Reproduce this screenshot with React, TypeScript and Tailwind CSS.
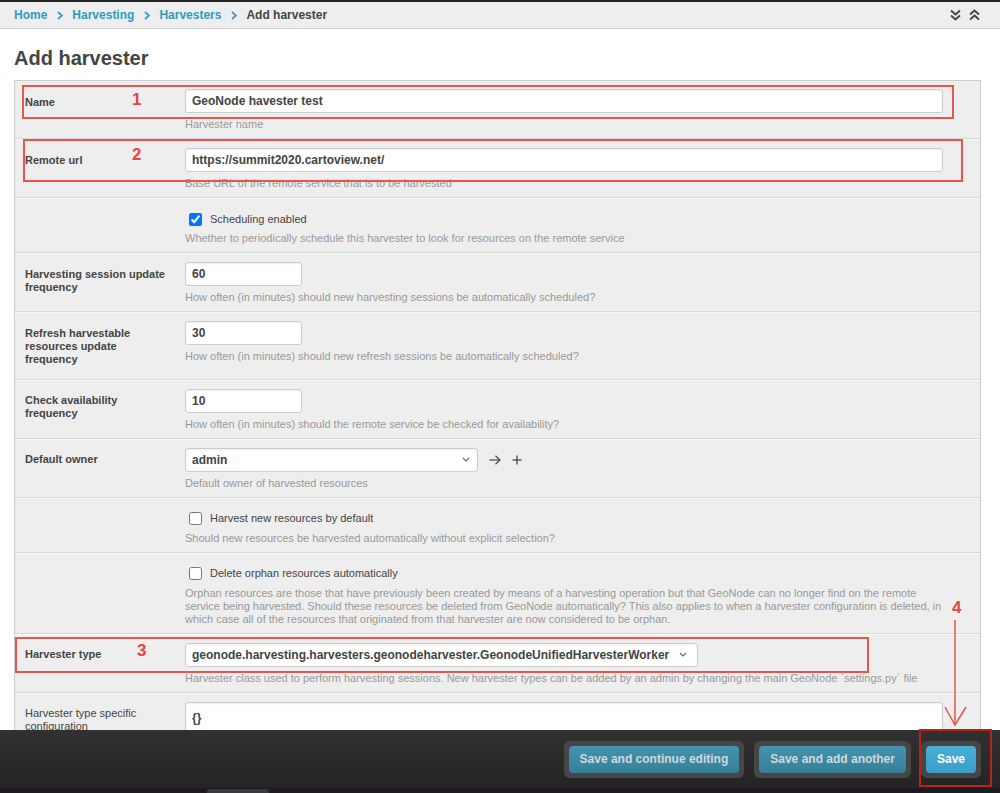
import React from "react";

const Chev = () => (
  <svg width="6" height="9" viewBox="0 0 6 9" className="ml-[10px] mr-[9px] shrink-0">
    <polyline points="1,1 5,4.5 1,8" fill="none" stroke="#3a9ec4" strokeWidth="1.8" />
  </svg>
);

const Row = ({
  label,
  children,
  first,
  normal,
}: {
  label?: React.ReactNode;
  children: React.ReactNode;
  first?: boolean;
  normal?: boolean;
}) => (
  <div
    className={
      first
        ? "flex"
        : "flex border-t border-[#d9d9d9] shadow-[inset_0_1px_0_#f8f8f8]"
    }
  >
    <div
      className={`w-[170px] shrink-0 pl-[10px] pr-[18px] pt-[14.5px] pb-[13px] text-[11px] leading-[13px] text-[#444] ${
        normal ? "font-normal" : "font-bold"
      }`}
    >
      {label}
    </div>
    <div className="flex-1 min-w-0 pr-[37px]">{children}</div>
  </div>
);

const Help = ({ children, mt = "mt-[5px]" }: { children: React.ReactNode; mt?: string }) => (
  <p className={`${mt} text-[11px] leading-[13px] text-[#999]`}>{children}</p>
);

const inputCls =
  "block h-[24px] bg-white border border-[#ccc] rounded-[3px] px-[6px] text-[12px] font-bold text-[#444] shadow-[inset_0_1px_2px_rgba(0,0,0,0.07)] outline-none";

const SelChevron = () => (
  <svg width="8" height="5" viewBox="0 0 8 5" className="block shrink-0">
    <polyline points="1,1 4,4 7,1" fill="none" stroke="#666" strokeWidth="1.1" />
  </svg>
);

const FieldCol = ({ children }: { children: React.ReactNode }) => (
  <div className="pt-[9px] pb-[7px]">{children}</div>
);

const CheckCol = ({
  checked,
  text,
  children,
}: {
  checked?: boolean;
  text: string;
  children: React.ReactNode;
}) => (
  <div className="pt-[10px] pb-[7px]">
    <div className="h-[22px] flex items-center">
      <input
        type="checkbox"
        defaultChecked={checked}
        className="block m-0 ml-[4px] w-[13px] h-[13px]"
      />
      <span className="ml-[8px] text-[11px] text-[#444]">{text}</span>
    </div>
    <Help mt="mt-[2px]">{children}</Help>
  </div>
);

const Btn = ({ children, primary }: { children: React.ReactNode; primary?: boolean }) => (
  <div className="p-[5px] bg-[#464646] rounded-[6px]">
    <div
      className={
        primary
          ? "h-[27px] px-[11px] rounded-[4px] flex items-center text-[12px] font-bold text-white bg-gradient-to-b from-[#47aed6] to-[#3a9ec8]"
          : "h-[27px] px-[11px] rounded-[4px] flex items-center text-[12px] font-bold text-[#cfd8db] bg-gradient-to-b from-[#4593ae] to-[#367f99]"
      }
    >
      {children}
    </div>
  </div>
);

export default function App() {
  return (
    <div className="relative w-[1000px] h-[793px] flex flex-col overflow-hidden bg-white font-['Liberation_Sans',Arial,sans-serif]">
      <div className="h-[2px] shrink-0 bg-[#222]" />
      <div className="h-[27px] shrink-0 bg-[#eee] border-b border-[#ccc] flex items-center pl-[14px] pr-[20px] text-[12px] font-bold">
        <span className="text-[#309bbf]">Home</span>
        <Chev />
        <span className="text-[#309bbf]">Harvesting</span>
        <Chev />
        <span className="text-[#309bbf]">Harvesters</span>
        <Chev />
        <span className="text-[#444]">Add harvester</span>
        <div className="ml-auto flex items-center gap-[8px]">
          <svg width="11" height="12" viewBox="0 0 11 12">
            <polyline points="1,1.5 5.5,5.5 10,1.5" fill="none" stroke="#444" strokeWidth="1.8" />
            <polyline points="1,6.5 5.5,10.5 10,6.5" fill="none" stroke="#444" strokeWidth="1.8" />
          </svg>
          <svg width="11" height="12" viewBox="0 0 11 12">
            <polyline points="1,5.5 5.5,1.5 10,5.5" fill="none" stroke="#444" strokeWidth="1.8" />
            <polyline points="1,10.5 5.5,6.5 10,10.5" fill="none" stroke="#444" strokeWidth="1.8" />
          </svg>
        </div>
      </div>

      <div className="flex-1 min-h-0 overflow-hidden">
        <h1 className="mt-[17px] mb-[10px] ml-[14px] text-[20px] leading-[24px] font-bold text-[#444]">
          Add harvester
        </h1>
        <div className="ml-[14px] mr-[19px] border border-[#ccc] bg-[#eee]">
          <Row first label="Name">
            <div className="pt-[8px] pb-[7px]">
              <input className={`${inputCls} w-full`} defaultValue="GeoNode havester test" />
              <Help>Harvester name</Help>
            </div>
          </Row>
          <Row label="Remote url">
            <FieldCol>
              <input className={`${inputCls} w-full`} defaultValue="https://summit2020.cartoview.net/" />
              <Help>Base URL of the remote service that is to be harvested</Help>
            </FieldCol>
          </Row>
          <Row>
            <CheckCol checked text="Scheduling enabled">
              Whether to periodically schedule this harvester to look for resources on the remote service
            </CheckCol>
          </Row>
          <Row label="Harvesting session update frequency">
            <FieldCol>
              <input className={`${inputCls} w-[117px]`} defaultValue="60" />
              <Help>How often (in minutes) should new harvesting sessions be automatically scheduled?</Help>
            </FieldCol>
          </Row>
          <Row label="Refresh harvestable resources update frequency">
            <FieldCol>
              <input className={`${inputCls} w-[117px]`} defaultValue="30" />
              <Help>How often (in minutes) should new refresh sessions be automatically scheduled?</Help>
            </FieldCol>
          </Row>
          <Row label="Check availability frequency">
            <FieldCol>
              <input className={`${inputCls} w-[117px]`} defaultValue="10" />
              <Help>How often (in minutes) should the remote service be checked for availability?</Help>
            </FieldCol>
          </Row>
          <Row label="Default owner">
            <FieldCol>
              <div className="flex items-center">
                <div className={`${inputCls} w-[293px] flex items-center justify-between pr-[7px]`}>
                  <span>admin</span>
                  <SelChevron />
                </div>
                <svg width="12" height="10" viewBox="0 0 12 10" className="ml-[11px]">
                  <line x1="0.5" y1="5" x2="11" y2="5" stroke="#444" strokeWidth="1.2" />
                  <polyline points="6.5,0.8 11,5 6.5,9.2" fill="none" stroke="#444" strokeWidth="1.2" />
                </svg>
                <svg width="10" height="10" viewBox="0 0 10 10" className="ml-[11px]">
                  <line x1="5" y1="0.5" x2="5" y2="9.5" stroke="#444" strokeWidth="1.3" />
                  <line x1="0.5" y1="5" x2="9.5" y2="5" stroke="#444" strokeWidth="1.3" />
                </svg>
              </div>
              <Help>Default owner of harvested resources</Help>
            </FieldCol>
          </Row>
          <Row>
            <CheckCol text="Harvest new resources by default">
              Should new resources be harvested automatically without explicit selection?
            </CheckCol>
          </Row>
          <Row>
            <CheckCol text="Delete orphan resources automatically">
              Orphan resources are those that have previously been created by means of a harvesting
              operation but that GeoNode can no longer find on the remote service being harvested.
              Should these resources be deleted from GeoNode automatically? This also applies to when a
              harvester configuration is deleted, in which case all of the resources that originated
              from that harvester are now considered to be orphan.
            </CheckCol>
          </Row>
          <Row label="Harvester type">
            <FieldCol>
              <div className="flex">
                <div className={`${inputCls} flex items-center pr-[10px]`}>
                  <span>geonode.harvesting.harvesters.geonodeharvester.GeonodeUnifiedHarvesterWorker</span>
                  <span className="ml-[10px] flex">
                    <SelChevron />
                  </span>
                </div>
              </div>
              <Help>
                Harvester class used to perform harvesting sessions. New harvester types can be added by
                an admin by changing the main GeoNode `settings.py` file
              </Help>
            </FieldCol>
          </Row>
          <Row normal label="Harvester type specific configuration">
            <FieldCol>
              <div className="h-[100px] w-full bg-white border border-[#ccc] rounded-[3px] px-[6px] pt-[6px] text-[12px] font-bold text-[#444] shadow-[inset_0_1px_2px_rgba(0,0,0,0.07)]">
                {"{}"}
              </div>
            </FieldCol>
          </Row>
        </div>
      </div>

      <div className="h-[58px] shrink-0 bg-gradient-to-b from-[#313131] to-[#242424] flex items-center justify-end pr-[19px] gap-[10px]">
        <Btn>Save and continue editing</Btn>
        <Btn>Save and add another</Btn>
        <Btn primary>Save</Btn>
      </div>
      <div className="h-[5px] shrink-0 bg-[#1e1a1f] flex">
        <div className="ml-[207px] mt-[1px] w-[62px] h-[4px] rounded-t-[3px] bg-[#3b393d]" />
      </div>

      {/* annotations */}
      <div className="absolute left-[22px] top-[85px] w-[932px] h-[34px] border-2 border-[#e5564d]" />
      <div className="absolute left-[23px] top-[139px] w-[940px] h-[43px] border-2 border-[#e5564d]" />
      <div className="absolute left-[15px] top-[637px] w-[854px] h-[36px] border-2 border-[#e5564d]" />
      <div className="absolute left-[919px] top-[729px] w-[73px] h-[58px] border-2 border-[#b9231e]" />
      <span className="absolute left-[132px] top-[91px] text-[17px] leading-[17px] font-bold text-[#e5453c]">1</span>
      <span className="absolute left-[132px] top-[146px] text-[17px] leading-[17px] font-bold text-[#e5453c]">2</span>
      <span className="absolute left-[137px] top-[642px] text-[17px] leading-[17px] font-bold text-[#e5453c]">3</span>
      <span className="absolute left-[952px] top-[599px] text-[17px] leading-[17px] font-bold text-[#e5453c]">4</span>
      <svg className="absolute left-[940px] top-[618px]" width="30" height="110" viewBox="0 0 30 110">
        <line x1="15" y1="2" x2="15" y2="107" stroke="#e5564d" strokeWidth="1.5" />
        <polyline points="5,89 15,107 26,89" fill="none" stroke="#e5564d" strokeWidth="1.5" />
      </svg>
    </div>
  );
}
